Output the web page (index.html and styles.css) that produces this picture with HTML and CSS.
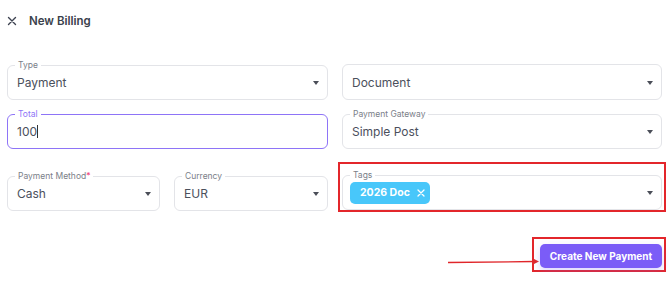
FILE: index.html
```html
<!DOCTYPE html>
<html lang="en">
<head>
    <meta charset="UTF-8">
    <meta name="viewport" content="width=device-width, initial-scale=1.0">
    <title>New Billing</title>
    <link rel="stylesheet" href="styles.css">
</head>
<body>
    <div class="header">
        <svg class="close-icon" width="10" height="10" viewBox="0 0 10 10">
            <path d="M1.5 1.5 L8.5 8.5 M8.5 1.5 L1.5 8.5" stroke="#3d4250" stroke-width="1.4" stroke-linecap="round"/>
        </svg>
        <h1>New Billing</h1>
    </div>

    <form class="billing-form">
        <fieldset class="field">
            <legend>Type</legend>
            <div class="value"><span>Payment</span><i class="caret"></i></div>
        </fieldset>
        <fieldset class="field no-label">
            <div class="value"><span>Document</span><i class="caret"></i></div>
        </fieldset>

        <fieldset class="field active">
            <legend>Total</legend>
            <div class="value"><span>100<b class="cursor"></b></span></div>
        </fieldset>
        <fieldset class="field">
            <legend>Payment Gateway</legend>
            <div class="value"><span>Simple Post</span><i class="caret"></i></div>
        </fieldset>

        <div class="split row-last">
            <fieldset class="field">
                <legend>Payment Method<em>*</em></legend>
                <div class="value"><span>Cash</span><i class="caret"></i></div>
            </fieldset>
            <fieldset class="field">
                <legend>Currency</legend>
                <div class="value"><span>EUR</span><i class="caret"></i></div>
            </fieldset>
        </div>
        <div class="highlight row-last">
            <fieldset class="field">
                <legend>Tags</legend>
                <div class="value">
                    <span class="chip">2026 Doc
                        <svg width="8" height="8" viewBox="0 0 8 8"><path d="M1 1 L7 7 M7 1 L1 7" stroke="#fff" stroke-width="1.3" stroke-linecap="round"/></svg>
                    </span>
                    <i class="caret"></i>
                </div>
            </fieldset>
        </div>
    </form>

    <div class="actions">
        <svg class="arrow" width="92" height="10" viewBox="0 0 92 10">
            <path d="M0 5.5 L86 4.5" stroke="#e0262a" stroke-width="1.3"/>
            <path d="M84 1 L91 4.5 L84 8 Z" fill="#e0262a"/>
        </svg>
        <div class="highlight btn-box">
            <button type="button">Create New Payment</button>
        </div>
    </div>
</body>
</html>
```

FILE: styles.css
```css
body {
    margin: 0;
    font-family: Inter, "Open Sans", sans-serif;
    color: #4b505c;
    background: #fff;
}
.header {
    display: flex;
    align-items: center;
    height: 42px;
    padding-left: 7px;
}
.close-icon {
    margin-right: 12px;
}
.header h1 {
    margin: 0;
    font-size: 11.5px;
    font-weight: 600;
    color: #3a3f4b;
}
.billing-form {
    display: grid;
    grid-template-columns: 321px 320px;
    column-gap: 14px;
    row-gap: 9px;
    align-items: end;
    padding: 0 0 0 7px;
    margin-top: 18px;
}
.split {
    display: grid;
    grid-template-columns: 153px 154px;
    column-gap: 14px;
    align-items: end;
}
.row-last {
    margin-top: 4px;
}
.field {
    margin: 0;
    padding: 0 8px 4px 9px;
    border: 1px solid #e3e4e8;
    border-radius: 6px;
    min-width: 0;
}
.field legend {
    font-size: 8.5px;
    line-height: 10px;
    color: #7a7e88;
    padding: 0 3px;
    margin-left: -2px;
}
.field legend em {
    font-style: normal;
    color: #f0477a;
}
.field.no-label {
    padding-top: 5px;
}
.field.active {
    border-color: #8e74f7;
}
.field.active legend {
    color: #8e74f7;
}
.value {
    height: 25px;
    display: flex;
    align-items: center;
    justify-content: space-between;
    font-size: 12px;
}
.caret {
    width: 0;
    height: 0;
    border-left: 3.5px solid transparent;
    border-right: 3.5px solid transparent;
    border-top: 4px solid #4a4e58;
}
.cursor {
    display: inline-block;
    width: 1px;
    height: 13px;
    background: #333;
    vertical-align: -2px;
}
.chip {
    display: inline-flex;
    align-items: center;
    gap: 7px;
    height: 22px;
    padding: 0 5px 0 10px;
    margin-left: -2px;
    border-radius: 5px;
    background: #48c7fa;
    color: #fff;
    font-size: 10.5px;
    font-weight: 700;
}
.highlight {
    border: 2px solid #e3262b;
}
.billing-form .highlight {
    padding: 6px 2px 0 2px;
    margin-left: -4px;
    margin-right: -4px;
    margin-bottom: -1px;
}
.actions {
    display: flex;
    justify-content: flex-end;
    align-items: flex-end;
    margin-top: 26px;
    padding-right: 4px;
}
.arrow {
    margin-bottom: 5px;
    margin-right: -8px;
}
.btn-box {
    padding: 5px 2px 2px 6px;
}
button {
    display: block;
    height: 24px;
    width: 122px;
    border: none;
    border-radius: 5px;
    background: #7b5cf7;
    color: #fff;
    font-family: inherit;
    font-size: 10px;
    font-weight: 700;
    box-shadow: 0 4px 8px rgba(123, 92, 247, 0.25);
    cursor: pointer;
}
```
